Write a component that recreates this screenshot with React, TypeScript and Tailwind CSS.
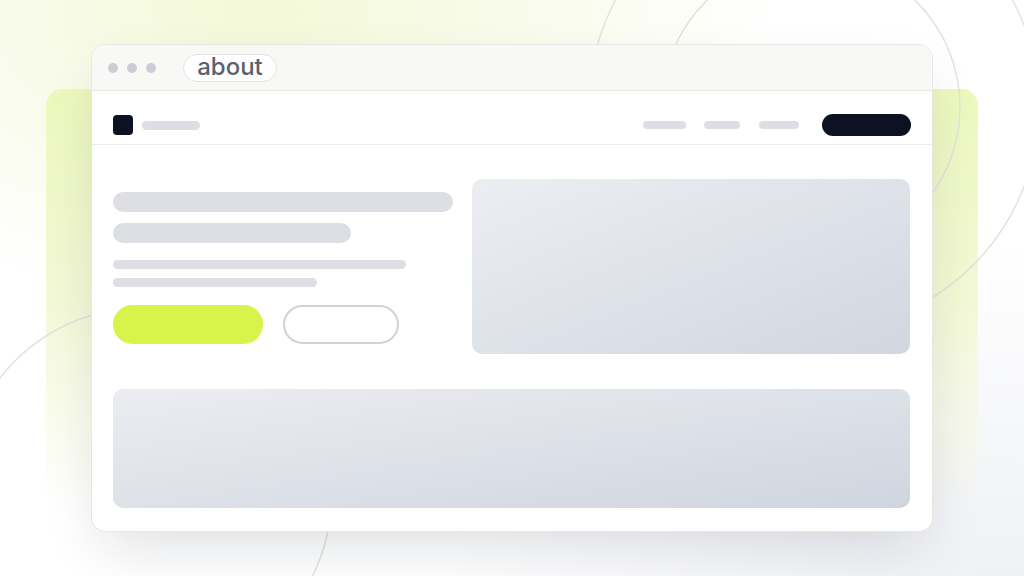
import React from "react";

export default function App() {
  return (
    <div
      className="relative w-[1024px] h-[576px] overflow-hidden bg-white"
      style={{ fontFamily: "Inter, 'Noto Sans', sans-serif" }}
    >
      {/* background glows */}
      <div className="absolute inset-0 bg-[radial-gradient(ellipse_520px_300px_at_260px_10px,#f3f9d8_0%,#f8fbe9_45%,rgba(255,255,255,0)_100%)]" />
      <div className="absolute inset-0 bg-[radial-gradient(ellipse_560px_360px_at_1000px_600px,#eef0f4_0%,rgba(255,255,255,0)_100%)]" />
      {/* lime panel behind the window */}
      <div className="absolute left-[46px] top-[89px] w-[932px] h-[420px] rounded-[16px] bg-gradient-to-b from-[#edf8bd] via-[#f3f9d6] to-[rgba(255,255,255,0)]" />
      {/* decorative circles */}
      <svg className="absolute inset-0" width="1024" height="576" viewBox="0 0 1024 576" fill="none">
        <circle cx="814" cy="106" r="225" stroke="#e2e3db" strokeWidth="1.5" />
        <circle cx="811" cy="107" r="149" stroke="#e2e3db" strokeWidth="1.5" />
        <circle cx="146" cy="493" r="186" stroke="#e2e3db" strokeWidth="1.5" />
      </svg>

      <div className="relative pl-[91px] pt-[44px]">
        <div className="w-[842px] h-[488px] rounded-[14px] border border-[#e8e8e2] bg-white overflow-hidden shadow-[0_24px_60px_-12px_rgba(15,23,42,0.14)] flex flex-col">
          {/* title bar */}
          <div className="h-[46px] shrink-0 bg-[#f8f8f6] border-b border-[#e8e8e3] flex items-center pl-[16px]">
            <div className="flex items-center gap-[9px]">
              <span className="w-[10px] h-[10px] rounded-full bg-[#cbccd4]" />
              <span className="w-[10px] h-[10px] rounded-full bg-[#cbccd4]" />
              <span className="w-[10px] h-[10px] rounded-full bg-[#cbccd4]" />
            </div>
            <div className="ml-[27px] w-[94px] h-[28px] rounded-full border border-[#e3e3de] bg-white flex items-center justify-center text-[24px] font-medium leading-none text-[#5a6173] pb-[1px]">
              about
            </div>
          </div>

          {/* nav */}
          <div className="shrink-0 border-b border-[#ebebe6] px-[21px] pt-[23px] pb-[8px] flex items-center">
            <div className="w-[20px] h-[20px] rounded-[4px] bg-[#0c1222]" />
            <div className="ml-[9px] w-[58px] h-[9px] rounded-full bg-[#dddee4]" />
            <div className="ml-auto flex items-center">
              <div className="w-[43px] h-[8px] rounded-full bg-[#dddee4]" />
              <div className="ml-[18px] w-[36px] h-[8px] rounded-full bg-[#dddee4]" />
              <div className="ml-[19px] w-[40px] h-[8px] rounded-full bg-[#dddee4]" />
              <div className="ml-[23px] w-[89px] h-[22px] rounded-full bg-[#0c1222]" />
            </div>
          </div>

          {/* main */}
          <div className="px-[21px] pt-[34px] flex flex-col">
            <div className="flex items-start gap-[19px]">
              <div className="w-[340px] pt-[13px] flex flex-col">
                <div className="w-[340px] h-[20px] rounded-full bg-[#dedfe4]" />
                <div className="mt-[11px] w-[238px] h-[20px] rounded-full bg-[#dedfe4]" />
                <div className="mt-[17px] w-[293px] h-[9px] rounded-full bg-[#dedfe4]" />
                <div className="mt-[9px] w-[204px] h-[9px] rounded-full bg-[#dedfe4]" />
                <div className="mt-[18px] flex items-center gap-[20px]">
                  <div className="w-[150px] h-[39px] rounded-full bg-[#d8f34a]" />
                  <div className="w-[116px] h-[39px] rounded-full border-2 border-[#cfd2da] bg-white" />
                </div>
              </div>
              <div className="w-[438px] h-[175px] rounded-[10px] bg-gradient-to-br from-[#eceef2] to-[#d1d6e0]" />
            </div>
            <div className="mt-[35px] w-[797px] h-[119px] rounded-[10px] bg-gradient-to-br from-[#ecedf1] to-[#cfd5df]" />
          </div>
        </div>
      </div>
    </div>
  );
}
